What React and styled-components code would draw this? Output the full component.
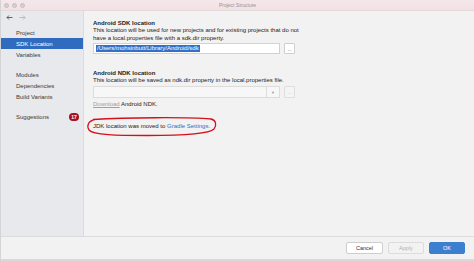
import styled, { createGlobalStyle } from "styled-components";

const GlobalStyle = createGlobalStyle`
  html, body {
    margin: 0;
    padding: 0;
    background: #f2f2f2;
  }
  body {
    font-family: "Liberation Sans", Arial, sans-serif;
    color: #222;
  }
`;

const Window = styled.div`
  width: 474px;
  height: 261px;
  display: flex;
  flex-direction: column;
  background: #f2f2f2;
  overflow: hidden;
  border-left: 1px solid #d4d4d4;
  box-sizing: border-box;
`;

const TitleBar = styled.div`
  height: 11px;
  flex: none;
  display: flex;
  align-items: center;
  position: relative;
  background: linear-gradient(#f5e8ea, #f1e2e4);
  border-bottom: 1px solid #e4d8da;
  box-sizing: border-box;
`;

const Lights = styled.div`
  display: flex;
  gap: 3px;
  padding-left: 3px;
`;

const Light = styled.span`
  width: 5px;
  height: 5px;
  border-radius: 50%;
  background: #d6cfd1;
  border: 0.5px solid #c8bfc1;
  box-sizing: border-box;
`;

const Title = styled.div`
  position: absolute;
  left: 0;
  right: 0;
  text-align: center;
  font-size: 5px;
  color: #9a8f91;
`;

const Main = styled.div`
  flex: 1;
  display: flex;
  min-height: 0;
`;

const Sidebar = styled.div`
  width: 82px;
  flex: none;
  background: #e7e9ec;
  border-right: 1px solid #dadcdf;
  display: flex;
  flex-direction: column;
  font-size: 6px;
  color: #3a3a3a;
`;

const NavRow = styled.div`
  height: 12px;
  display: flex;
  align-items: center;
  gap: 6px;
  padding-left: 5px;
  margin-bottom: 4px;
`;

const Group = styled.div`
  display: flex;
  flex-direction: column;
  margin-bottom: ${(p) => p.$gap || 0}px;
`;

const Item = styled.div`
  height: 11px;
  display: flex;
  align-items: center;
  justify-content: space-between;
  padding: 0 4px 0 15px;
  background: ${(p) => (p.$active ? "#2f6bbf" : "transparent")};
  color: ${(p) => (p.$active ? "#fff" : "#3a3a3a")};
`;

const Badge = styled.span`
  width: 10px;
  height: 8px;
  border-radius: 4px;
  background: #a5121c;
  color: #fff;
  font-size: 5px;
  font-weight: bold;
  display: flex;
  align-items: center;
  justify-content: center;
  margin-right: 0px;
`;

const Content = styled.div`
  flex: 1;
  position: relative;
  padding: 9px 0 0 9px;
  font-size: 6px;
  color: #222;
`;

const Heading = styled.div`
  font-weight: bold;
  line-height: 7px;
  margin-top: ${(p) => p.$top || 0}px;
`;

const Desc = styled.div`
  line-height: 7.5px;
`;

const FieldRow = styled.div`
  display: flex;
  align-items: center;
  gap: 4px;
  margin-top: ${(p) => p.$top || 0}px;
`;

const Input = styled.div`
  width: 187px;
  height: 11px;
  box-sizing: border-box;
  background: #fff;
  border: 1px solid #d2d2d2;
  display: flex;
  align-items: center;
  padding-left: 2px;
`;

const Selected = styled.span`
  background: #3470c8;
  color: #fff;
  line-height: 7px;
  padding: 0 1px;
`;

const Select = styled.div`
  width: 187px;
  height: 12px;
  box-sizing: border-box;
  background: #f7f7f7;
  border: 1px solid #dcdcdc;
  display: flex;
  justify-content: flex-end;
`;

const Arrow = styled.div`
  width: 12px;
  border-left: 1px solid #dcdcdc;
  display: flex;
  align-items: center;
  justify-content: center;
  color: #999;
  font-size: 4px;
`;

const SmallButton = styled.div`
  width: 11px;
  height: ${(p) => p.$h || 11}px;
  box-sizing: border-box;
  background: ${(p) => (p.$disabled ? "#f4f4f4" : "#fff")};
  border: 1px solid ${(p) => (p.$disabled ? "#dedede" : "#cfcfcf")};
  border-radius: 1px;
  display: flex;
  align-items: center;
  justify-content: center;
  font-size: 5px;
  color: ${(p) => (p.$disabled ? "#bbb" : "#555")};
`;

const Line = styled.div`
  line-height: 7px;
  margin-top: ${(p) => p.$top || 0}px;
`;

const Muted = styled.span`
  color: #a0a0a0;
  text-decoration: underline;
`;

const Link = styled.span`
  color: #2e6fc6;
`;

const Oval = styled.svg`
  position: absolute;
  left: 3px;
  top: 106px;
  width: 130px;
  height: 20px;
  overflow: visible;
`;

const Footer = styled.div`
  height: 25px;
  flex: none;
  box-sizing: border-box;
  border-top: 1px solid #dcdcdc;
  border-bottom: 2px solid #d9d9d9;
  display: flex;
  align-items: center;
  justify-content: flex-end;
  gap: 5px;
  padding-right: 9px;
`;

const Button = styled.div`
  width: ${(p) => p.$w || 36}px;
  height: 12px;
  box-sizing: border-box;
  border-radius: 2px;
  display: flex;
  align-items: center;
  justify-content: center;
  font-size: 5.5px;
  background: ${(p) =>
    p.$primary ? "#3c7ecf" : p.$disabled ? "#f2f2f2" : "#fff"};
  border: 1px solid
    ${(p) => (p.$primary ? "#3c7ecf" : p.$disabled ? "#dcdcdc" : "#cdcdcd")};
  color: ${(p) => (p.$primary ? "#fff" : p.$disabled ? "#b0b0b0" : "#333")};
`;

const App = () => {
  return (
    <>
      <GlobalStyle />
      <Window>
        <TitleBar>
          <Lights>
            <Light />
            <Light />
            <Light />
          </Lights>
          <Title>Project Structure</Title>
        </TitleBar>
        <Main>
          <Sidebar>
            <NavRow>
              <svg width="7" height="5" viewBox="0 0 7 5">
                <path d="M6.5 2.5H1M3 0.5L1 2.5L3 4.5" stroke="#555" strokeWidth="0.9" fill="none" />
              </svg>
              <svg width="7" height="5" viewBox="0 0 7 5">
                <path d="M0.5 2.5H6M4 0.5L6 2.5L4 4.5" stroke="#b5b5b5" strokeWidth="0.9" fill="none" />
              </svg>
            </NavRow>
            <Group $gap={9.5}>
              <Item>Project</Item>
              <Item $active>SDK Location</Item>
              <Item>Variables</Item>
            </Group>
            <Group $gap={8.5}>
              <Item>Modules</Item>
              <Item>Dependencies</Item>
              <Item>Build Variants</Item>
            </Group>
            <Group>
              <Item>
                Suggestions
                <Badge>17</Badge>
              </Item>
            </Group>
          </Sidebar>
          <Content>
            <Heading>Android SDK location</Heading>
            <Desc>
              This location will be used for new projects and for existing projects that do not
              <br />
              have a local.properties file with a sdk.dir property.
            </Desc>
            <FieldRow $top={1}>
              <Input>
                <Selected>/Users/mohsinbutt/Library/Android/sdk</Selected>
              </Input>
              <SmallButton>...</SmallButton>
            </FieldRow>
            <Heading $top={15.5}>Android NDK location</Heading>
            <Desc>This location will be saved as ndk.dir property in the local.properties file.</Desc>
            <FieldRow $top={2}>
              <Select>
                <Arrow>▼</Arrow>
              </Select>
              <SmallButton $h={12} $disabled>
                ...
              </SmallButton>
            </FieldRow>
            <Line $top={2.5}>
              <Muted>Download</Muted> Android NDK.
            </Line>
            <Line $top={15}>
              JDK location was moved to <Link>Gradle Settings.</Link>
            </Line>
            <Oval viewBox="0 0 130 20">
              <path
                d="M6 2.5 C40 0.5 100 0 124 2 C129 3 130 8 127 12 C122 17.5 90 18.5 60 18.5 C30 18.5 6 18 2 13 C-0.5 9 1 4 8 2.5"
                stroke="#d4111b"
                strokeWidth="1.3"
                fill="none"
              />
            </Oval>
          </Content>
        </Main>
        <Footer>
          <Button $w={37}>Cancel</Button>
          <Button $disabled>Apply</Button>
          <Button $primary>OK</Button>
        </Footer>
      </Window>
    </>
  );
};

export default App;
